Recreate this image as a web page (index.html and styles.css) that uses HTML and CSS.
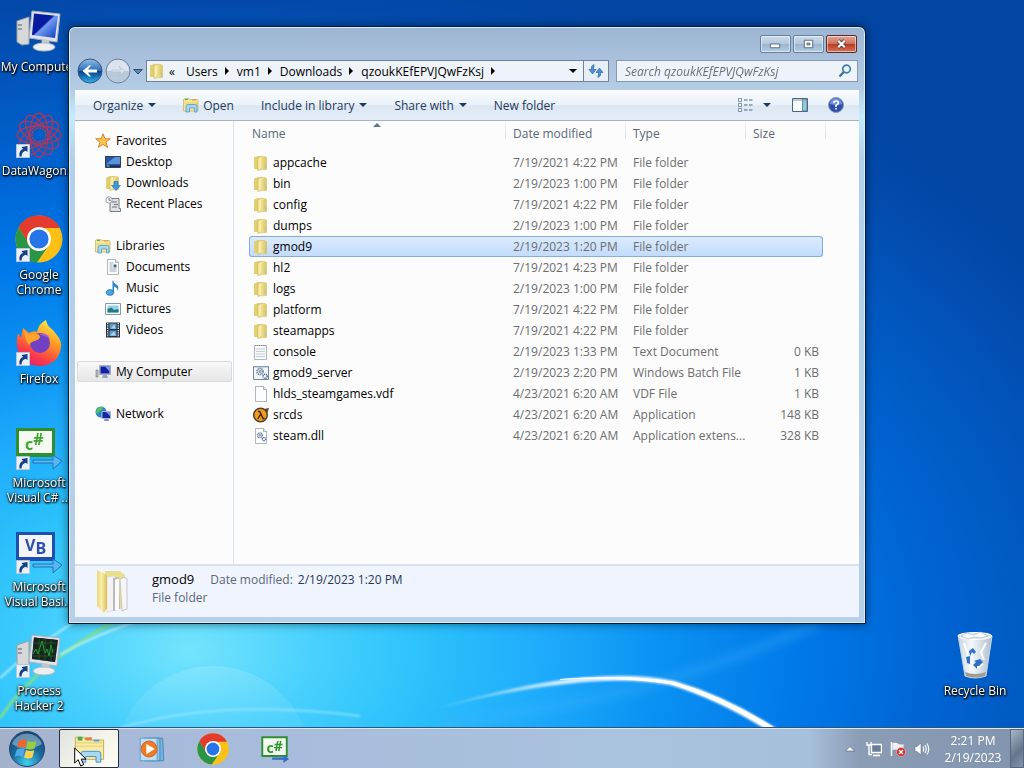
FILE: index.html
```html
<!DOCTYPE html>
<html lang="en">
<head>
  <meta charset="UTF-8">
  <title>qzoukKEfEPVJQwFzKsj</title>
  <link rel="stylesheet" href="styles.css">
</head>
<body>
  <!-- shared icons -->
  <svg class="defs" aria-hidden="true">
    <defs>
      <linearGradient id="gFolder" x1="0" x2="1"><stop offset="0" stop-color="#e8d67c"/><stop offset=".45" stop-color="#f9efab"/><stop offset="1" stop-color="#d9bf55"/></linearGradient>
      <linearGradient id="gScreen" x1="0" y1="0" x2="1" y2="1"><stop offset="0" stop-color="#0a1f9c"/><stop offset=".45" stop-color="#0618a0"/><stop offset=".5" stop-color="#6f9cf0"/><stop offset="1" stop-color="#0b35c4"/></linearGradient>
      <linearGradient id="gBlue" x1="0" y1="0" x2="0" y2="1"><stop offset="0" stop-color="#8fc0e8"/><stop offset=".48" stop-color="#2b6db8"/><stop offset=".52" stop-color="#0b3f8c"/><stop offset="1" stop-color="#2fb4ee"/></linearGradient>
      <radialGradient id="gOrb" cx=".5" cy=".9" r=".9"><stop offset="0" stop-color="#3fd0ef"/><stop offset=".5" stop-color="#1b6a9c"/><stop offset="1" stop-color="#174472"/></radialGradient>
      <linearGradient id="gFox" x1=".8" y1="0" x2=".3" y2="1"><stop offset="0" stop-color="#fff44f"/><stop offset=".4" stop-color="#ff9a22"/><stop offset=".75" stop-color="#fb4048"/><stop offset="1" stop-color="#e81c6a"/></linearGradient>
      <linearGradient id="gBin" x1="0" x2="1"><stop offset="0" stop-color="#c9d6e2"/><stop offset=".4" stop-color="#f4f8fb"/><stop offset="1" stop-color="#aebecd"/></linearGradient>
    </defs>
    <symbol id="folder" viewBox="0 0 16 16">
      <path d="M1 2.500 5 1v13L1 14z" fill="#e3cf72"/>
      <path d="M5 1.500h7l1.500 1v12L5 15z" fill="url(#gFolder)" stroke="#d2bb5c" stroke-width=".5"/>
      <path d="M5 3 9 1V13.500L5 15.500z" fill="#f7eda9" stroke="#c9b04f" stroke-width=".5"/>
      <path d="M11 3v11" stroke="#dcc768"/><path d="M12.500 9v4" stroke="#a9c6a8"/>
    </symbol>
    <symbol id="library" viewBox="0 0 16 16">
      <path d="M.5 14V2.500L2 1.500h4l1 1h7.500l.5 1V14z" fill="#f6e69a" stroke="#c8b055" stroke-width=".7"/>
      <path d="M2 2.500h3" stroke="#4caf50"/><path d="M9 3h4" stroke="#e2894a"/>
      <path d="M.5 6h15" stroke="#dcc66a" stroke-width=".7"/>
      <path d="M3 15V9q0-1.500 1.500-1.500h8q1.500 0 1.500 1.500v6h-2.500v-4h-5v4z" fill="#a3d6f2" stroke="#3e8fc6" stroke-width=".7"/>
    </symbol>
    <symbol id="computer" viewBox="0 0 48 48">
      <path d="M2 14 14 10v27L7 38l-5-3z" fill="#d6d8da" stroke="#9b9ea2"/>
      <path d="M3 18h4M3 22h4" stroke="#55595e"/>
      <path d="M17 4 45 7l-3 28-28-4z" fill="#dfe3e8" stroke="#aab0b8"/>
      <path d="M19 6.500 43 9l-3 22-23-3z" fill="url(#gScreen)"/>
      <path d="m27 32 7 1 1 6h-9z" fill="#c5c9ce"/>
      <ellipse cx="29" cy="40" rx="11" ry="4" fill="#eceef0" stroke="#b3b7bc"/>
    </symbol>
    <symbol id="computerSmall" viewBox="0 0 16 16">
      <path d="M1 6h2v7H1z" fill="#b8bcc4" stroke="#777" stroke-width=".6"/>
      <path d="M4.500 1.500h11v9h-11z" fill="#b9c4dc" stroke="#8790aa" stroke-width=".6"/>
      <path d="M5.500 2.500h9v7h-9z" fill="#1420a4"/><path d="m10 2.500 4.500 0v5z" fill="#7c9cf0"/>
      <path d="M8 11h4l1 3H7z" fill="#9aa3b5"/>
    </symbol>
    <symbol id="shortcut" viewBox="0 0 14 14">
      <path d="M.5.5h13v13H.5z" fill="#e8f1fa" stroke="#b7c7d9"/>
      <path d="M3.500 12.500Q2.500 6.500 7 5L5.500 3 11.500 2v6L9.800 6.800Q5.500 8 5.500 12.500z" fill="#153f86"/>
    </symbol>
    <symbol id="chrome" viewBox="0 0 48 48">
      <circle cx="24" cy="24" r="23.500" fill="#fbc116"/>
      <path d="M3.600 12.200A23.500 23.500 0 0 1 44.400 12.200L44.400 13H24L14 29.500z" fill="#e33b2e"/>
      <path d="M3.600 12.200A23.500 23.500 0 0 0 22 47.400L34.400 29.500 24 36 14.500 30z" fill="#2a9447"/>
      <circle cx="24" cy="24" r="12" fill="#fff"/><circle cx="24" cy="24" r="9.600" fill="#2574e8"/>
    </symbol>
    <symbol id="page" viewBox="0 0 16 16">
      <path d="M2.500.5h8l3 3v12h-11z" fill="#fdfdfe" stroke="#9ba3ad" stroke-width=".8"/>
      <path d="M10.500.5v3h3" fill="#e3e8ee" stroke="#9ba3ad" stroke-width=".8"/>
    </symbol>
    <symbol id="gears" viewBox="0 0 16 16">
      <circle cx="6" cy="6.500" r="3" fill="#eef4fa" stroke="#5c7591" stroke-width="1.600" stroke-dasharray="1.200 .7"/>
      <circle cx="6" cy="6.500" r="1" fill="none" stroke="#3d5a80" stroke-width=".8"/>
      <circle cx="11" cy="11.300" r="2.100" fill="#eef4fa" stroke="#3f5f8c" stroke-width="1.400" stroke-dasharray="1 .6"/>
    </symbol>
    <symbol id="desktopIcon" viewBox="0 0 16 16">
      <path d="M.5 2.500h15v11H.5z" fill="#27569f" stroke="#31405c"/>
      <path d="M1 10 10 3h5v7z" fill="#5a92dc"/><path d="M1 11.500h14V13H1z" fill="#1d2c49"/><path d="M1.500 12h3" stroke="#7fd3f2"/>
    </symbol>
  </svg>

  <main class="desktop">
    <svg class="wallpaper" viewBox="0 0 1024 768" preserveAspectRatio="none" aria-hidden="true">
      <defs>
        <radialGradient id="sky" gradientUnits="userSpaceOnUse" cx="0" cy="0" r="1" gradientTransform="translate(190 650) scale(1060 700)">
          <stop offset="0" stop-color="#74e4fd"/><stop offset=".12" stop-color="#48d0fd"/><stop offset=".22" stop-color="#2cc2fb"/>
          <stop offset=".34" stop-color="#1eaafb"/><stop offset=".45" stop-color="#0a90f2"/><stop offset=".58" stop-color="#0078e8"/>
          <stop offset=".7" stop-color="#0064d2"/><stop offset=".93" stop-color="#0349aa"/><stop offset="1" stop-color="#0345a2"/>
        </radialGradient>
        <linearGradient id="fadeIn"><stop offset="0" stop-color="#fff" stop-opacity=".1"/><stop offset=".35" stop-color="#fff" stop-opacity=".8"/><stop offset="1" stop-color="#fff"/></linearGradient>
        <linearGradient id="bubble" x1="0" y1="0" x2="0" y2="1"><stop offset="0" stop-color="#fff" stop-opacity=".14"/><stop offset=".5" stop-color="#fff" stop-opacity="0"/></linearGradient>
        <filter id="soft"><feGaussianBlur stdDeviation="1"/></filter>
        <filter id="softer"><feGaussianBlur stdDeviation="5"/></filter>
      </defs>
      <rect width="1024" height="768" fill="url(#sky)"/>
      <circle cx="213" cy="764" r="98" fill="url(#bubble)"/>
      <path d="M440 722Q640 705 820 622" fill="none" stroke="#3fb4ff" stroke-opacity=".3" stroke-width="10" filter="url(#softer)"/>
      <path d="M120 728Q220 698 360 716" fill="none" stroke="#aeeaff" stroke-opacity=".6" stroke-width="2" filter="url(#soft)"/>
      <path d="M0 718Q40 660 118 620" fill="none" stroke="#7fe08a" stroke-width="3" filter="url(#soft)"/>
      <path d="M60 655Q90 637 140 620M0 678Q30 650 74 622" fill="none" stroke="#c9f6ff" stroke-opacity=".8" stroke-width="2" filter="url(#soft)"/>
      <path d="M440 707Q590 663 675 681 730 697 785 734L773 734Q720 700 670 685 590 670 440 708z" fill="url(#fadeIn)" filter="url(#soft)"/>
      <path d="M560 679Q630 674 675 682 728 697 781 732L775 733Q720 699 670 684 620 677 560 680z" fill="#fff"/>
    </svg>

    <div class="shortcuts">
      <button class="shortcut">
        <svg class="pic"><use href="#computer"/></svg>
        <span class="one">My Computer</span>
      </button>
      <button class="shortcut">
        <svg class="pic" viewBox="0 0 48 48">
          <g fill="none" stroke="#a8385f" stroke-width="1.300">
            <ellipse cx="24" cy="24" rx="22" ry="9"/><ellipse cx="24" cy="24" rx="22" ry="9" transform="rotate(30 24 24)"/>
            <ellipse cx="24" cy="24" rx="22" ry="9" transform="rotate(60 24 24)"/><ellipse cx="24" cy="24" rx="22" ry="9" transform="rotate(90 24 24)"/>
            <ellipse cx="24" cy="24" rx="22" ry="9" transform="rotate(120 24 24)"/><ellipse cx="24" cy="24" rx="22" ry="9" transform="rotate(150 24 24)"/>
            <circle cx="24" cy="24" r="7" stroke="#c23a4c" stroke-dasharray="2 1"/>
          </g>
          <use href="#shortcut" x="1" y="33" width="14" height="14"/>
        </svg>
        <span class="one">DataWagon...</span>
      </button>
      <button class="shortcut">
        <svg class="pic" viewBox="0 0 48 48"><use href="#chrome"/><use href="#shortcut" x="1" y="33" width="14" height="14"/></svg>
        <span>Google Chrome</span>
      </button>
      <button class="shortcut">
        <svg class="pic" viewBox="0 0 48 48">
          <path d="M3 14 6 19 8 9 14 14Q19 11 22 13 24 4 31 1 32 7 38 11L41 15Q47 21 46 29 43 46 25 47 5 46 2 27 1 20 3 14z" fill="url(#gFox)"/>
          <circle cx="25" cy="24" r="10" fill="#7140c4"/><path d="M24 15q9-2 11 6-2-3-6-4z" fill="#a15ad8"/>
          <path d="M9 11q4 5 9 4 6-1 7 3-1 3-6 4-3 1-5 4-4-4-5-15z" fill="#ffa32c"/>
          <use href="#shortcut" x="1" y="33" width="14" height="14"/>
        </svg>
        <span>Firefox</span>
      </button>
      <button class="shortcut">
        <svg class="pic" viewBox="0 0 48 48">
          <path d="M1 5h39v29H1z" fill="#2f8f2f"/><path d="M4 8h33v22H4z" fill="#f4faf2"/>
          <text x="10" y="27" class="logo" fill="#3fa62f">c<tspan dy="-5">#</tspan></text>
          <path d="M18 37h20v-5l9 6-9 8v-6H18z" fill="#57b7ee" stroke="#1d74ba"/>
          <use href="#shortcut" x="1" y="33" width="14" height="14"/>
        </svg>
        <span>Microsoft Visual C# ...</span>
      </button>
      <button class="shortcut">
        <svg class="pic" viewBox="0 0 48 48">
          <path d="M1 5h39v29H1z" fill="#1f4fae"/><path d="M4 8h33v22H4z" fill="#f2f5fc"/>
          <text x="10" y="24" class="logo" fill="#2e4fb0">V<tspan dy="3">B</tspan></text>
          <path d="M18 37h20v-5l9 6-9 8v-6H18z" fill="#57b7ee" stroke="#1d74ba"/>
          <use href="#shortcut" x="1" y="33" width="14" height="14"/>
        </svg>
        <span>Microsoft Visual Basi...</span>
      </button>
      <button class="shortcut">
        <svg class="pic" viewBox="0 0 48 48">
          <use href="#computer"/>
          <path d="M19 6.500 43 9l-3 22-23-3z" fill="#18241c"/>
          <path d="m18 23 3-5 2 5 4-13 3 12 2-4 2 7 2-11 2 8" fill="none" stroke="#25a93c"/>
          <path d="M19 12h22M18 19h22M18 25h22M24 8v21M30 8v22M36 9v21" stroke="#1c6a2c" stroke-width=".7"/>
          <use href="#shortcut" x="1" y="33" width="14" height="14"/>
        </svg>
        <span>Process Hacker 2</span>
      </button>
    </div>

    <button class="shortcut recycle">
      <svg class="pic" viewBox="0 0 48 48">
        <path d="m7 4 34 1-6 40q-11 4-21 0z" fill="url(#gBin)" stroke="#c7d5e2"/>
        <ellipse cx="24" cy="5" rx="17" ry="3.500" fill="#dfe8ef" stroke="#fff"/>
        <path d="m10 5 6-3 7 2 6-3 8 4-8 2-5-1-7 2z" fill="#fafcfd" stroke="#9fb0bd" stroke-width=".6"/>
        <path d="m13 12 4 12-2 6M35 12l-5 9 3 8M18 34l8 3 6-4" fill="none" stroke="#fff" stroke-width="2"/>
        <path d="m18 20 4-3 3 4-2 2-2-2-2 4zM15 26l4-1 0 8-3-1zM23 30l6-2 3 3-4 4-2 0v3l-4-4 3-3z" fill="#2f70cf"/>
        <path d="M14 41q10 4 21 0l-1 4q-9 3-19 0z" fill="#a09c90"/>
      </svg>
      <span class="one">Recycle Bin</span>
    </button>

    <section class="window">
      <div class="titlebar">
        <button class="caption" aria-label="Minimize"><svg viewBox="0 0 30 17"><path d="M9.500 8.500h10v4h-10z" fill="#fff" stroke="#55677d"/></svg></button>
        <button class="caption" aria-label="Maximize"><svg viewBox="0 0 30 17"><path d="M10.500 4.500h9v8h-9z" fill="#fff" stroke="#55677d"/><path d="M13.500 7.500h3v2h-3z" fill="#9db6d2" stroke="#55677d"/></svg></button>
        <button class="caption close" aria-label="Close"><svg viewBox="0 0 30 17"><path d="m11.500 5 7 7m0-7-7 7" stroke="#5d3030" stroke-width="4"/><path d="m11.500 5 7 7m0-7-7 7" stroke="#fff" stroke-width="2.400"/></svg></button>
      </div>

      <div class="navbar">
        <button class="round" aria-label="Back"><svg viewBox="0 0 26 26"><circle cx="13" cy="13" r="12" fill="url(#gBlue)" stroke="#34557f"/><path d="M5.500 13 12 7.500h2l-3 4h9v3h-9l3 4h-2z" fill="#fff"/></svg></button>
        <button class="round" aria-label="Forward"><svg viewBox="0 0 26 26"><circle cx="13" cy="13" r="12" fill="#b9c9dc" stroke="#70849e"/><path d="M2 13a11 11 0 0 1 22 0z" fill="#dbe4ef"/><path d="m20 13-6-5 2 4H7v2h9l-2 4z" fill="#d9e3ee" stroke="#aebccd" stroke-width=".6"/></svg></button>
        <button class="recent" aria-label="Recent locations"><svg viewBox="0 0 10 8"><path d="M.7 2.500h8.600L5 7z" fill="#4f8db8" stroke="#2f4f70"/></svg></button>
        <div class="address">
          <svg class="ico"><use href="#folder"/></svg>
          <button class="crumb">«</button>
          <button class="crumb">Users</button><i class="arrow"></i>
          <button class="crumb">vm1</button><i class="arrow"></i>
          <button class="crumb">Downloads</button><i class="arrow"></i>
          <button class="crumb">qzoukKEfEPVJQwFzKsj</button><i class="arrow"></i>
          <button class="drop" aria-label="Previous locations"><i class="down"></i></button>
        </div>
        <button class="refresh" aria-label="Refresh"><svg class="ico" viewBox="0 0 16 16"><path d="M6 1.500v2h-.500v3H8L4.500 11 1 6.500h2.500V3.500z" fill="#4b93d6" stroke="#1e5a9c" stroke-width=".6"/><path d="M10 14.500v-2h.500v-3H8L11.500 5 15 9.500h-2.500v3z" fill="#4b93d6" stroke="#1e5a9c" stroke-width=".6"/></svg></button>
        <div class="search">
          <input type="text" aria-label="Search" placeholder="Search qzoukKEfEPVJQwFzKsj">
          <svg class="ico" viewBox="0 0 16 16"><circle cx="9.500" cy="6" r="3.800" fill="#e6f3fb" stroke="#3e7fb0" stroke-width="1.700"/><path d="m6.800 9-4.300 4.500" stroke="#3b6d96" stroke-width="2.200"/></svg>
        </div>
      </div>

      <div class="client">
        <div class="toolbar">
          <button class="organize">Organize <i class="down"></i></button>
          <button class="open"><svg class="ico"><use href="#library"/></svg>Open</button>
          <button class="include">Include in library <i class="down"></i></button>
          <button class="share">Share with <i class="down"></i></button>
          <button>New folder</button>
          <button class="views" aria-label="Change your view"><svg class="ico" viewBox="0 0 16 16"><g fill="#fff" stroke="#61758d" stroke-width=".8"><path d="M1.500 1.500h3v3h-3zM1.500 6.500h3v3h-3zM1.500 11.500h3v3h-3z"/></g><path d="M7 3h3.500M12 3h3.500M7 8h3.500M12 8h3.500M7 13h3.500M12 13h3.500" stroke="#51657c"/></svg> <i class="down"></i></button>
          <button class="preview" aria-label="Preview pane"><svg class="ico" viewBox="0 0 16 16"><path d="M.5 1.500h15v13H.5z" fill="#fbfdff" stroke="#476786"/><path d="M10.500 2v12H15V2z" fill="#8fcbd8" stroke="#476786" stroke-width=".7"/><path d="M1 3h14" stroke="#7d95ad"/></svg></button>
          <button aria-label="Help"><svg class="ico" viewBox="0 0 16 16"><circle cx="8" cy="8" r="7.500" fill="#2e50ae" stroke="#8a97b8"/><path d="M2 7a6 6 0 0 1 12 0q-6 2-12 0z" fill="#6f8edb"/><path d="M5.800 6.200Q5.800 4 8 4t2.300 2Q10.300 7.300 8 8.300V10M8 11v1.600" fill="none" stroke="#fff" stroke-width="1.600"/></svg></button>
        </div>

        <div class="panes">
          <nav class="tree">
            <a class="root" href="#"><svg class="ico" viewBox="0 0 16 16"><path d="m8 .8 2 5h5.300L11 9.200l1.700 5.300L8 11.300l-4.700 3.200L5 9.200.7 5.800H6z" fill="#fcc64a" stroke="#d9772b" stroke-width=".9"/></svg>Favorites</a>
            <a href="#"><svg class="ico"><use href="#desktopIcon"/></svg>Desktop</a>
            <a href="#"><svg class="ico" viewBox="0 0 16 16"><use href="#folder"/><path d="M9 6.500h4v4h2.500L11 15.500 6.500 10.500H9z" fill="#3a9be0" stroke="#1d68a8" stroke-width=".6"/></svg>Downloads</a>
            <a href="#"><svg class="ico" viewBox="0 0 16 16"><path d="M5 2.500h9v10h1.500v3H5z" fill="#dfe2e5" stroke="#777c82"/><path d="M7 6h5M9 8.500h4M7 11h5" stroke="#6e757d"/><circle cx="4" cy="4" r="3.200" fill="#f5f7f9" stroke="#8a9097" stroke-width=".8"/><path d="M4 2v2.300h2" fill="none" stroke="#555" stroke-width=".8"/></svg>Recent Places</a>

            <a class="root gap" href="#"><svg class="ico"><use href="#library"/></svg>Libraries</a>
            <a href="#"><svg class="ico" viewBox="0 0 16 16"><use href="#page"/><path d="M4.500 4h4M4.500 6h3M4.500 8h3M4.500 10h7M4.500 12h7" stroke="#8192a6" stroke-width=".8"/><path d="M8.500 5.500h3v3h-3z" fill="#3f6792"/></svg>Documents</a>
            <a href="#"><svg class="ico" viewBox="0 0 16 16"><ellipse cx="5" cy="12.500" rx="3.800" ry="2.900" fill="#4aa7e2" stroke="#1d6fb3" stroke-width=".7"/><path d="M8 .5Q9 4 12 5q2.500 1.500.5 6 .3-3.500-3.500-4.500V13H7.500V.5z" fill="#2f86cc"/></svg>Music</a>
            <a href="#"><svg class="ico" viewBox="0 0 16 16"><path d="M.5 2.500h15v11H.5z" fill="#fbfcfd" stroke="#8b98a5"/><path d="M2.500 4.500h11v7h-11z" fill="#8fd2e6"/><path d="m2.500 8 4-1.500L9 9l4.500-1v3.500h-11z" fill="#1d7c82"/></svg>Pictures</a>
            <a href="#"><svg class="ico" viewBox="0 0 16 16"><path d="M1 .5h14v15H1z" fill="#26313d"/><path d="M4.500 1.500h7v5.500h-7zM4.500 8.500h7V14h-7z" fill="#5a9bd0"/><path d="m6 6.500 3-4 2 4zM5 13.500l4-4 2 4z" fill="#a7d4ef"/><path d="M2.700 1v14M13.300 1v14" stroke="#e9edf1" stroke-width="1.400" stroke-dasharray="1.300 1"/></svg>Videos</a>

            <a class="root gap current" href="#"><svg class="ico"><use href="#computerSmall"/></svg>My Computer</a>

            <a class="root gap" href="#"><svg class="ico" viewBox="0 0 16 16"><circle cx="6" cy="6" r="5.500" fill="#2487c8"/><path d="M2 3q3-3 6-2.500Q8 4 5 5 3 8 1 7zM6 7l4 1-3 3.500z" fill="#5fc25b"/><path d="M7 5.500h8.500v7H7z" fill="#1624a8" stroke="#aab8d8"/><path d="m11 6 4 0v4z" fill="#6d90ee"/><path d="M9.500 13h4l.5 2H9z" fill="#8c98b0"/></svg>Network</a>
          </nav>

          <div class="files">
            <table>
              <colgroup><col><col class="date"><col class="type"><col class="size"></colgroup>
              <thead>
                <tr><th>Name<i class="sorted"></i></th><th>Date modified</th><th>Type</th><th>Size</th></tr>
              </thead>
              <tbody>
                <tr><td><svg class="ico"><use href="#folder"/></svg>appcache</td><td>7/19/2021 4:22 PM</td><td>File folder</td><td></td></tr>
                <tr><td><svg class="ico"><use href="#folder"/></svg>bin</td><td>2/19/2023 1:00 PM</td><td>File folder</td><td></td></tr>
                <tr><td><svg class="ico"><use href="#folder"/></svg>config</td><td>7/19/2021 4:22 PM</td><td>File folder</td><td></td></tr>
                <tr><td><svg class="ico"><use href="#folder"/></svg>dumps</td><td>2/19/2023 1:00 PM</td><td>File folder</td><td></td></tr>
                <tr class="selected"><td><svg class="ico"><use href="#folder"/></svg>gmod9</td><td>2/19/2023 1:20 PM</td><td>File folder</td><td></td></tr>
                <tr><td><svg class="ico"><use href="#folder"/></svg>hl2</td><td>7/19/2021 4:23 PM</td><td>File folder</td><td></td></tr>
                <tr><td><svg class="ico"><use href="#folder"/></svg>logs</td><td>2/19/2023 1:00 PM</td><td>File folder</td><td></td></tr>
                <tr><td><svg class="ico"><use href="#folder"/></svg>platform</td><td>7/19/2021 4:22 PM</td><td>File folder</td><td></td></tr>
                <tr><td><svg class="ico"><use href="#folder"/></svg>steamapps</td><td>7/19/2021 4:22 PM</td><td>File folder</td><td></td></tr>
                <tr><td><svg class="ico" viewBox="0 0 16 16"><path d="M1.500 1.500h12v14h-12z" fill="#f8f9fa" stroke="#a1a7ae" stroke-width=".8"/><path d="M2 1.500h12" stroke="#8a9199" stroke-dasharray="1 1"/><path d="M3 5h9M3 7.500h9M3 10h9M3 12.500h9" stroke="#b9c0c8" stroke-width=".8"/></svg>console</td><td>2/19/2023 1:33 PM</td><td>Text Document</td><td>0 KB</td></tr>
                <tr><td><svg class="ico" viewBox="0 0 16 16"><path d="M.5 1.500h15v13H.5z" fill="#f2f6fb" stroke="#7487a5"/><path d="M1 2h14" stroke="#9db2d0"/><use href="#gears" x="1"/></svg>gmod9_server</td><td>2/19/2023 2:20 PM</td><td>Windows Batch File</td><td>1 KB</td></tr>
                <tr><td><svg class="ico"><use href="#page"/></svg>hlds_steamgames.vdf</td><td>4/23/2021 6:20 AM</td><td>VDF File</td><td>1 KB</td></tr>
                <tr><td><svg class="ico" viewBox="0 0 16 16"><path d="m11 2 5-1-2 6z" fill="#554322"/><circle cx="7.500" cy="8" r="6.800" fill="#f29c1e" stroke="#54422c" stroke-width="1.500"/><path d="M5 4.500h1.800l3.200 7h1.500M7.700 7 4.800 12" fill="none" stroke="#3a2408" stroke-width="1.400"/></svg>srcds</td><td>4/23/2021 6:20 AM</td><td>Application</td><td>148 KB</td></tr>
                <tr><td><svg class="ico" viewBox="0 0 16 16"><use href="#page"/><use href="#gears" x="2" y="2" width="13" height="13"/></svg>steam.dll</td><td>4/23/2021 6:20 AM</td><td>Application extens...</td><td>328 KB</td></tr>
              </tbody>
            </table>
          </div>
        </div>

        <div class="details">
          <svg class="big" viewBox="0 0 36 46">
            <path d="M10 3h15l5 4v34H10z" fill="#eadf8e"/>
            <path d="m12 9 8-1 1 34-9 2z" fill="#f3f3f4" stroke="#d5d5d8" stroke-width=".6"/>
            <path d="m18 10 6-1 1 32-7 2z" fill="#b9babd"/><path d="M20 12q4-3 4 0v30h-4z" fill="#fafafb"/>
            <path d="M25 11q6-3 7 0v30l-5 2z" fill="#f5f5f6" stroke="#c6c6c9"/>
            <path d="m2 2 10 5v33l-3 5-7-7z" fill="url(#gFolder)"/>
          </svg>
          <dl>
            <div class="title">gmod9</div>
            <div><dt>Date modified:</dt><dd>2/19/2023 1:20 PM</dd></div>
            <div class="kind">File folder</div>
          </dl>
        </div>
      </div>
    </section>
  </main>

  <footer class="taskbar">
    <button class="start" aria-label="Start">
      <svg viewBox="0 0 38 38">
        <circle cx="19" cy="19" r="17.500" fill="url(#gOrb)" stroke="#24476c"/>
        <path d="M4 14a15.500 14 0 0 1 30 0q-8 5-15 5T4 14z" fill="#a8cbe0" fill-opacity=".55"/>
        <path d="M11 11q4-3 8-.500l-2 7.500q-4-2-8 0z" fill="#f0652a"/><path d="M20 11q4 2 8.500 0l-2 7.500q-4 2-8.500-.300z" fill="#97cf3c"/>
        <path d="M8.700 19.500q4-2 8 0l-2 7.500q-4-2.500-8 0z" fill="#4fa8ea"/><path d="M18 20q4 2 8.300.300l-2 7.200q-4 2-8.300 0z" fill="#fdd24a"/>
      </svg>
    </button>
    <button class="task active" aria-label="Windows Explorer">
      <svg class="app" viewBox="0 0 34 34">
        <path d="M2.500 28V4.500h9l2 3h19V28z" fill="#f8eba3" stroke="#c3a94e"/>
        <path d="M5 4h5v4H5z" fill="#48a94d"/><path d="M13 6h7" stroke="#e08147" stroke-width="3"/><path d="M22 8h6" stroke="#5f9bd5" stroke-width="2"/>
        <path d="M3 10.500h29M3 14h29" stroke="#dfcb75"/>
        <path d="M8.500 31V22q0-2.500 2.500-2.500h16q2.500 0 2.500 2.500v9h-5v-6h-11v6z" fill="#a9d9f4" stroke="#3e92cb"/>
      </svg>
    </button>
    <button class="task" aria-label="Windows Media Player">
      <svg class="app" viewBox="0 0 34 34">
        <path d="M14.500 5.500h15l1 24h-15z" fill="#79b4dd" stroke="#4585b4"/><path d="M9.500 5.500h17v24h-17z" fill="#8ec3e8" stroke="#4585b4"/>
        <path d="M5.500 5.500h18v24h-18z" fill="#bcdff5" stroke="#5b9cc9"/><circle cx="15" cy="17" r="8.500" fill="#ee7b24" stroke="#d0622f"/><path d="m12 11.500 9 5.500-9 5.500z" fill="#fff"/>
      </svg>
    </button>
    <button class="task" aria-label="Google Chrome"><svg class="app"><use href="#chrome"/></svg></button>
    <button class="task" aria-label="Visual C#">
      <svg class="app" viewBox="0 0 34 34">
        <path d="M3.500 4.500h26v20h-26z" fill="#f4faf2" stroke="#2c8f2e" stroke-width="2"/>
        <text x="8" y="21" class="logo small" fill="#2c9626">c<tspan dy="-2">#</tspan></text>
        <path d="M14 26h12v-3l6 4.500-6 4v-3H14z" fill="#3468cb"/>
      </svg>
    </button>

    <div class="tray">
      <button aria-label="Show hidden icons"><svg viewBox="0 0 16 16"><path d="M3.500 10 8 5.500l4.500 4.500z" fill="#fff" stroke="#4c5e77" stroke-width=".6"/></svg></button>
      <button aria-label="Network"><svg viewBox="0 0 16 16"><path d="M5.500 3.500h10v8h-10z" fill="#6b7e98" stroke="#fff" stroke-width="1.400"/><path d="M7 14.500h7" stroke="#fff" stroke-width="1.600"/><path d="M1 1v3h4V1M3 4v9.500h3" fill="none" stroke="#fff" stroke-width="1.400"/></svg></button>
      <button aria-label="Action Center"><svg viewBox="0 0 16 16"><path d="M1.500 1v14" stroke="#fff" stroke-width="1.500"/><path d="M2.500 2q4-1 6 1 3 1 5 0v7q-3 1-6-1-2-1-5 0z" fill="#eef2f6"/><circle cx="11" cy="11" r="4.500" fill="#d42a2a" stroke="#f3c3c3" stroke-width=".6"/><path d="m9 9 4 4m0-4-4 4" stroke="#fff" stroke-width="1.500"/></svg></button>
      <button aria-label="Volume"><svg viewBox="0 0 16 16"><path d="M1 5.500h2L7 2v12l-4-3.500H1z" fill="#fff" stroke="#55677f" stroke-width=".5"/><path d="M9 5.500q1.500 2.500 0 5M11 4q2.500 4 0 8M13 2.500q3.500 5.500 0 11" fill="none" stroke="#fff" stroke-width="1.100"/></svg></button>
    </div>
    <button class="clock">2:21 PM<br>2/19/2023</button>
    <button class="peek" aria-label="Show desktop"></button>
  </footer>

  <svg class="cursor" viewBox="0 0 13 20" aria-hidden="true"><path d="M.7 1v15l3.500-3.300L6.700 19l3-1.300-2.500-5.600h4.800z" fill="#fff" stroke="#000"/></svg>
</body>
</html>
```
FILE: styles.css
```css
* {
  box-sizing: border-box;
}
body {
  margin: 0;
  height: 100vh;
  overflow: hidden;
  display: flex;
  flex-direction: column;
  background: #0064d2;
  color: #000;
  font-family: "Open Sans", "Noto Sans", sans-serif;
  font-size: 12px;
  line-height: 15px;
}
button, input {
  font: inherit;
  color: inherit;
  background: none;
  border: 0;
  padding: 0;
}
button, a {
  cursor: default;
}
svg {
  display: block;
  flex: none;
}
.defs {
  position: absolute;
  width: 0;
  height: 0;
}
.ico {
  width: 16px;
  height: 16px;
}
.logo {
  font: bold 16px "Open Sans", sans-serif;
  text-shadow: none;
}
.logo.small {
  font-size: 15px;
}

/* little triangles */
.down {
  border: 4px solid transparent;
  border-top-color: #1e395b;
  border-bottom: 0;
}
.arrow {
  border: 4px solid transparent;
  border-left-color: #000;
  border-right: 0;
}

/* desktop */
.desktop {
  flex: 1;
  position: relative;
}
.wallpaper {
  position: fixed;
  top: 0;
  left: 0;
  width: 100%;
  height: 100%;
}
.shortcuts {
  position: relative;
  width: 78px;
}
.shortcut {
  display: flex;
  flex-direction: column;
  align-items: center;
  width: 78px;
  height: 104px;
  padding: 7px 2px 0;
  gap: 4px;
  color: #fff;
  text-shadow: 0 1px 2px #000, 1px 1px 2px #000, 0 0 3px #000;
}
.shortcut .pic {
  width: 48px;
  height: 48px;
}
.shortcut span {
  min-width: 100%;
}
.shortcut .one {
  white-space: nowrap;
}
.recycle {
  position: absolute;
  right: 10px;
  bottom: 0;
}

/* explorer window */
.window {
  position: absolute;
  top: 26px;
  left: 68px;
  right: 158px;
  bottom: 104px;
  display: flex;
  flex-direction: column;
  padding: 0 6px 6px;
  border: 1px solid #0a1c33;
  border-radius: 7px 7px 0 0;
  background: linear-gradient(#9cb5d2, #b5cce5 62px, #c3ecfa 90px, #b3d0ea 130px, #b7cfe8);
  box-shadow: inset 0 0 0 1px #cdeefb, 0 0 8px rgba(0, 0, 0, .5);
}
.titlebar {
  display: flex;
  justify-content: flex-end;
  gap: 2px;
  height: 30px;
  padding: 8px 2px 0;
}
.caption {
  width: 31px;
  height: 18px;
  border: 1px solid #64809f;
  border-radius: 2px;
  background: linear-gradient(#cbdaea, #b3c8de 48%, #9bb5d1 52%, #b4cbe2);
  box-shadow: inset 0 0 0 1px rgba(255, 255, 255, .5);
}
.caption svg {
  width: 100%;
  height: 100%;
}
.close {
  border-color: #5d2a2a;
  background: linear-gradient(#e3a597, #d0705d 48%, #b93c24 52%, #d3745a);
}
.navbar {
  display: flex;
  align-items: center;
  height: 33px;
  padding: 0 1px 5px 2px;
}
.round {
  margin-right: 2px;
}
.round svg {
  width: 26px;
  height: 26px;
}
.recent {
  margin-right: 3px;
}
.recent svg {
  width: 10px;
  height: 8px;
}
.address {
  flex: 1;
  min-width: 0;
  display: flex;
  align-items: center;
  height: 22px;
  padding: 0 6px 0 2px;
  border: 1px solid #6f8299;
  background: #eef3f9;
}
.crumb {
  margin: 0 7px 0 4px;
}
.crumb + .arrow {
  margin-right: 4px;
}
.drop {
  margin-left: auto;
}
.drop .down {
  display: block;
  border-top-color: #000;
}
.refresh {
  display: flex;
  align-items: center;
  justify-content: center;
  width: 25px;
  height: 22px;
  margin-right: 7px;
  border: 1px solid #6f8299;
  border-left: 0;
  background: #e6eef7;
}
.search {
  display: flex;
  align-items: center;
  flex: 0 1 242px;
  height: 22px;
  padding: 0 4px 0 8px;
  border: 1px solid #8499b0;
  background: #edf3f9;
}
.search input {
  flex: 1;
  min-width: 0;
  font-style: italic;
  outline: 0;
}
.search input::placeholder {
  color: #6d6d78;
}
.client {
  flex: 1;
  min-height: 0;
  display: flex;
  flex-direction: column;
  background: #fcfcfd;
}
.toolbar {
  display: flex;
  align-items: center;
  height: 31px;
  padding: 0 15px 0 18px;
  border-bottom: 1px solid #a5b3c7;
  background: linear-gradient(#fafcfe, #e9f1fa 50%, #dce7f4 52%, #e4edf8);
  color: #1e395b;
}
.toolbar button {
  display: flex;
  align-items: center;
  gap: 5px;
}
.toolbar .organize,
.toolbar .open,
.toolbar .include,
.toolbar .share {
  margin-right: 27px;
}
.toolbar .open {
  gap: 4px;
}
.toolbar .views {
  gap: 10px;
  margin-left: auto;
  margin-right: 21px;
}
.toolbar .preview {
  margin-right: 20px;
}
.panes {
  flex: 1;
  min-height: 0;
  display: flex;
}
.tree {
  flex: 0 0 159px;
  padding: 9px 1px 0 2px;
  border-right: 1px solid #d9e3f0;
}
.tree a {
  display: flex;
  align-items: center;
  gap: 5px;
  height: 21px;
  padding-left: 28px;
  color: #000;
  text-decoration: none;
}
.tree .root {
  padding-left: 18px;
}
.tree .gap {
  margin-top: 21px;
}
.tree .current {
  border: 1px solid #dadada;
  border-radius: 2px;
  padding-left: 17px;
  background: linear-gradient(#f8f8f8, #e6e6e6);
}
.files {
  flex: 1;
  min-width: 0;
  padding: 0 36px 0 15px;
}
table {
  width: 100%;
  table-layout: fixed;
  border-collapse: separate;
  border-spacing: 0;
  color: #6d6d6d;
}
.date, .type {
  width: 120px;
}
.size {
  width: 77px;
}
th {
  position: relative;
  height: 31px;
  padding: 5px 7px 0;
  vertical-align: top;
  text-align: left;
  font-weight: normal;
  color: #5a6779;
}
th:first-child {
  padding-left: 3px;
}
th::after {
  content: "";
  position: absolute;
  top: 0;
  right: 0;
  width: 1px;
  height: 17px;
  background: linear-gradient(#f3f5f9, #d5dbe6);
}
th:last-child::after {
  right: -3px;
}
.sorted {
  position: absolute;
  top: 2px;
  left: 50%;
  margin-left: -5px;
  border: 4px solid transparent;
  border-bottom-color: #5b7690;
  border-top: 0;
}
td {
  height: 21px;
  padding: 0 7px;
  white-space: nowrap;
}
td:first-child {
  display: flex;
  align-items: center;
  gap: 4px;
  padding: 0 4px;
  color: #000;
}
td:last-child {
  text-align: right;
  padding-right: 4px;
}
.selected td {
  background: linear-gradient(#dcebfd, #c1dbfc);
  box-shadow: inset 0 1px #84acdd, inset 0 -1px #84acdd;
}
.selected td:first-child {
  border-left: 1px solid #84acdd;
  border-radius: 3px 0 0 3px;
  padding-left: 3px;
}
.selected td:last-child {
  border-right: 1px solid #84acdd;
  border-radius: 0 3px 3px 0;
}
.details {
  display: flex;
  gap: 21px;
  height: 53px;
  padding: 2px 20px;
  border-top: 2px solid #d9dfeb;
  background: #f0f4fd;
  color: #5a6779;
}
.big {
  width: 36px;
  height: 46px;
}
.details dl {
  display: grid;
  grid-template-columns: auto auto;
  align-content: start;
  column-gap: 16px;
  row-gap: 3px;
  margin: 4px 0 0;
}
.details .title {
  color: #000;
  font-size: 13px;
}
.details dt, .details dd {
  display: inline;
  margin: 0;
}
.details dd {
  margin-left: 5px;
  color: #1e395b;
}
.kind {
  grid-column: 1 / 3;
}

/* taskbar */
.taskbar {
  position: relative;
  display: flex;
  align-items: center;
  height: 40px;
  padding-left: 8px;
  border-top: 1px solid #dbe6f2;
  box-shadow: 0 -1px #2c5680;
  background: linear-gradient(90deg, #a4b1cb, #a7bad9 12%, #a9c2de 60%, #a6bfdb 79%, #8b9cb5 84%, #8394ae);
}
.start {
  margin-right: 13px;
}
.start svg {
  width: 38px;
  height: 38px;
}
.task {
  display: flex;
  align-items: center;
  justify-content: center;
  width: 60px;
  height: 39px;
  margin-right: 2px;
}
.task.active {
  border: 1px solid #24303c;
  border-radius: 2px;
  background: linear-gradient(135deg, #dfe2df, #f6f6ec 60%, #fdfdf6);
}
.app {
  width: 32px;
  height: 32px;
}
.tray {
  display: flex;
  gap: 8px;
  margin-left: auto;
}
.tray svg {
  width: 16px;
  height: 16px;
}
.clock {
  width: 74px;
  margin-left: 6px;
  color: #fff;
  line-height: 17px;
  text-align: center;
}
.peek {
  width: 14px;
  height: 39px;
  border: 1px solid #56677f;
  background: linear-gradient(135deg, #a9b6c8, #65758d 60%, #8595ad);
}
.cursor {
  position: fixed;
  left: 74px;
  bottom: 1px;
  width: 13px;
  height: 20px;
}
```
